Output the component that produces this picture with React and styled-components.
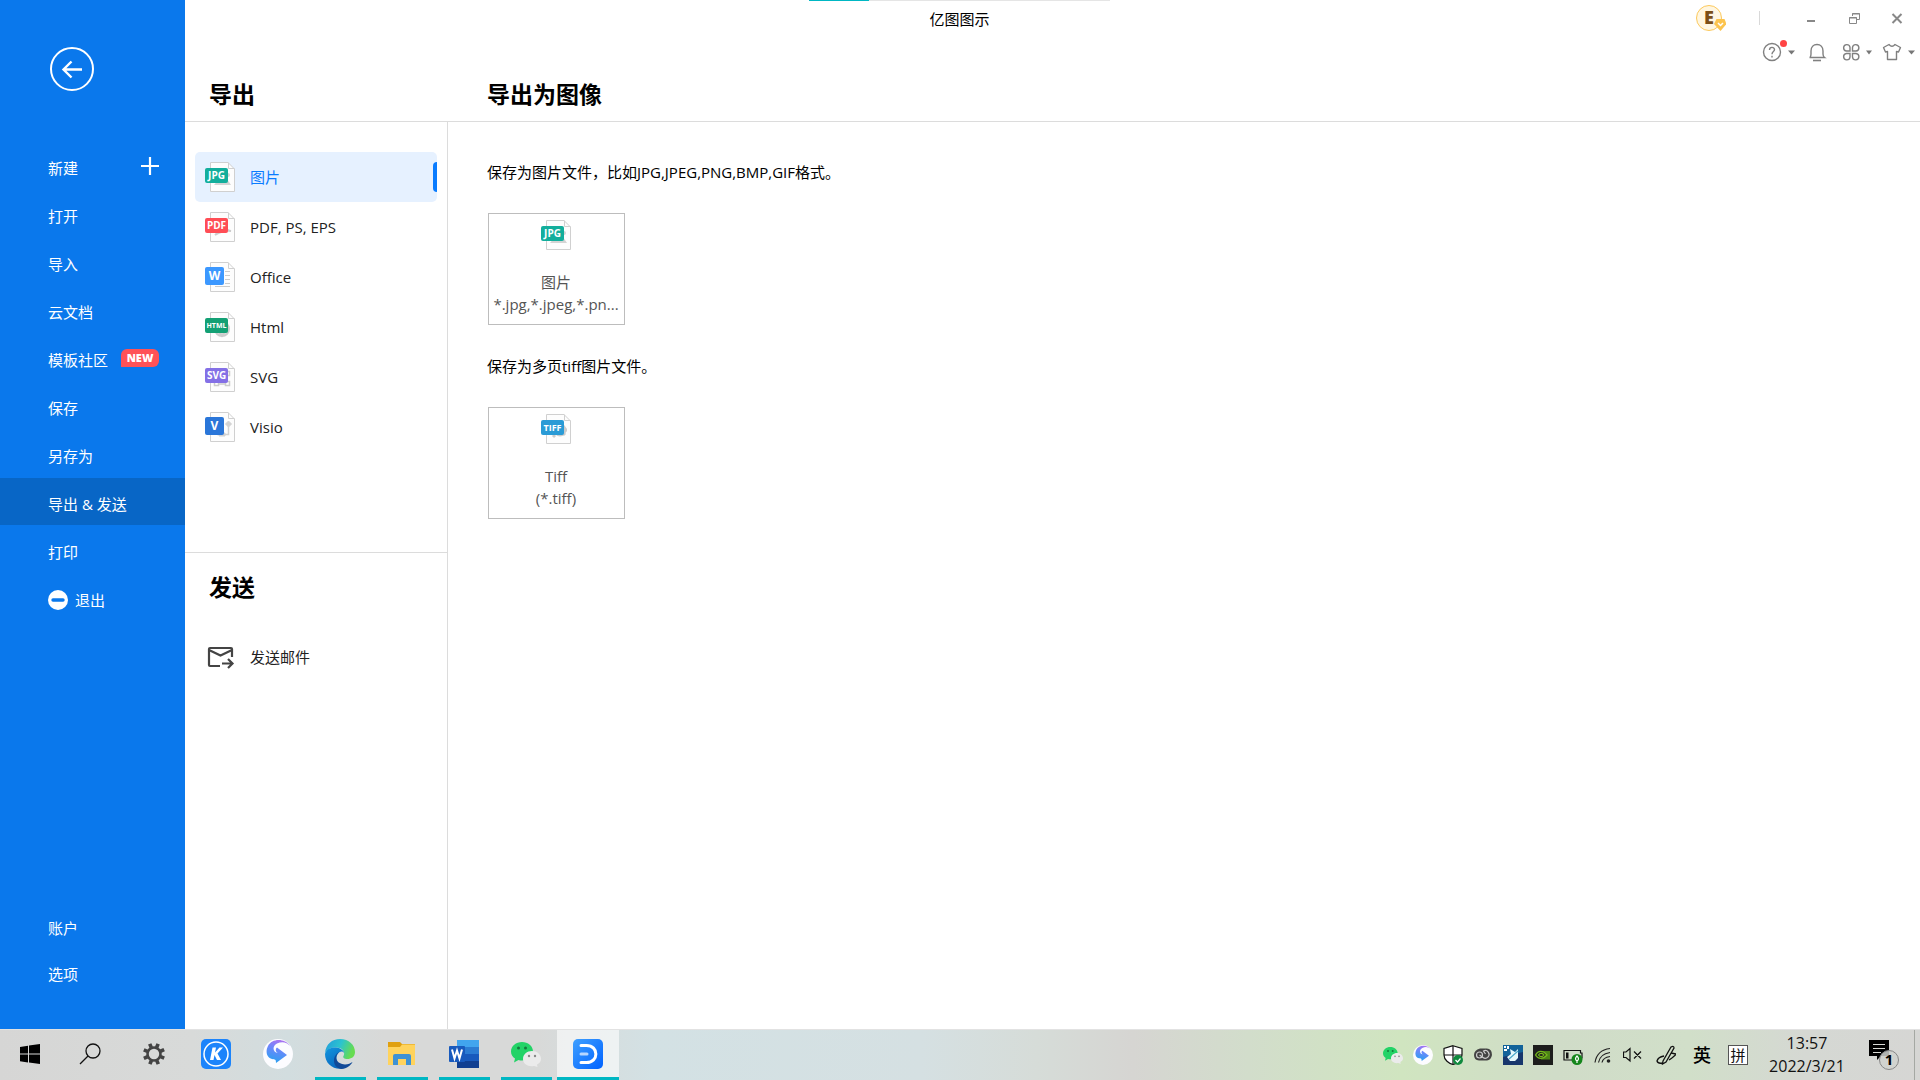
import React from 'react'
import styled, { createGlobalStyle } from 'styled-components'

const GlobalStyle = createGlobalStyle`
  * {
    box-sizing: border-box;
  }
  body {
    margin: 0;
    background: #fff;
    font-family: 'Open Sans', 'Noto Sans CJK SC', sans-serif;
    font-size: 15px;
    line-height: 22px;
    font-weight: 400;
    color: #222;
  }
  button {
    margin: 0;
    padding: 0;
    border: 0;
    background: none;
    font: inherit;
    color: inherit;
    text-align: left;
    cursor: pointer;
  }
  svg {
    display: block;
    flex: none;
  }
`

const Screen = styled.div`
  display: flex;
  flex-direction: column;
  min-height: 100vh;
`

const Window = styled.div`
  flex: 1;
  display: flex;
`

/* ---------- blue side bar ---------- */

const Sidebar = styled.aside`
  flex: none;
  width: 185px;
  display: flex;
  flex-direction: column;
  padding: 47px 0 32px;
  background: #0a78ec;
  color: #fff;
`

const BackButton = styled.button`
  width: 44px;
  height: 44px;
  margin: 0 0 51px 50px;
`

const Menu = styled.nav`
  display: flex;
  flex-direction: column;
`

const FootMenu = styled(Menu)`
  margin-top: auto;
`

const MenuItem = styled.button`
  display: flex;
  align-items: center;
  justify-content: space-between;
  height: ${(p) => (p.$foot ? 46 : 47)}px;
  margin-bottom: ${(p) => (p.$foot ? 0 : 1)}px;
  padding: 0 26px 0 48px;
  background: ${(p) => (p.$active ? '#0866c6' : 'none')};
`

const MenuLabel = styled.span`
  display: flex;
  align-items: center;
  gap: 7px;
  padding-top: ${(p) => (p.$foot ? 0 : 4)}px;
`

const NewBadge = styled.span`
  width: 38px;
  height: 18px;
  border-radius: 6px 6px 6px 0;
  background: #ff5257;
  font-size: 11px;
  font-weight: 800;
  line-height: 18px;
  text-align: center;
`

/* ---------- right pane ---------- */

const Pane = styled.div`
  flex: 1;
  min-width: 0;
  display: flex;
  flex-direction: column;
`

const WindowBar = styled.header`
  display: grid;
  grid-template-columns: calc(50vw - 336px) 301px 1fr;
  height: 36px;
`

const Caption = styled.div`
  grid-column: 2;
  display: flex;
  flex-direction: column;
  gap: 7px;
  color: #000;
  text-align: center;
`

const Progress = styled.div`
  height: 1px;
  background: linear-gradient(to right, #00b7c3 60px, #e5e5e5 60px);
`

const WindowControls = styled.div`
  display: flex;
  justify-content: flex-end;
  align-items: center;
  padding-right: 1px;
`

const AccountButton = styled.button`
  margin-right: 33px;
`

const Divider = styled.span`
  width: 1px;
  height: 14px;
  margin-right: 27px;
  background: #d9d9d9;
`

const ControlButton = styled.button`
  display: flex;
  justify-content: center;
  width: 44px;
`

const Toolbar = styled.div`
  display: flex;
  justify-content: flex-end;
  align-items: center;
  gap: 8px;
  height: 32px;
  padding-right: 2px;
`

const Titles = styled.div`
  display: flex;
  align-items: center;
  height: 54px;
  padding-bottom: 2px;
  border-bottom: 1px solid #dcdcdc;
`

const Title = styled.h2`
  width: ${(p) => (p.$wide ? 'auto' : '278px')};
  margin: 0;
  padding-left: 24px;
  color: #000;
  font-size: 23px;
  font-weight: 700;
  line-height: 34px;
`

const Columns = styled.div`
  flex: 1;
  display: flex;
`

const SideList = styled.div`
  flex: none;
  width: 263px;
  border-right: 1px solid #dcdcdc;
`

const ExportList = styled.nav`
  display: flex;
  flex-direction: column;
  height: 431px;
  padding: 30px 10px;
  border-bottom: 1px solid #dcdcdc;
`

const ExportItem = styled.button`
  display: flex;
  align-items: center;
  gap: 15px;
  height: 50px;
  padding-left: 10px;
  border-radius: 5px;
  background: ${(p) => (p.$active ? '#e6f1ff' : 'none')};
  color: ${(p) => (p.$active ? '#0a7cff' : '#222')};
`

const ActiveMark = styled.span`
  width: 4px;
  height: 30px;
  margin-left: auto;
  border-radius: 4px 0 0 4px;
  background: #0a7cff;
`

const SendSection = styled.section`
  padding-top: 17px;
`

const SendItem = styled.button`
  display: flex;
  align-items: center;
  gap: 15px;
  width: 100%;
  height: 50px;
  margin-top: 28px;
  padding-left: 20px;
`

const Content = styled.main`
  flex: 1;
  padding: 39px 40px 40px 39px;
`

const Hint = styled.p`
  margin: 0 0 30px;
  color: #000;
`

const FormatCard = styled.button`
  display: flex;
  flex-direction: column;
  align-items: center;
  width: 137px;
  height: 112px;
  margin: 0 0 30px 1px;
  padding: 6px 1px 0 0;
  border: 1px solid #bdbdbd;
  color: #555;
`

const CardName = styled.span`
  margin-top: 21px;
`

const CardMask = styled.span`
  white-space: nowrap;
`

/* ---------- task bar ---------- */

const TaskBar = styled.footer`
  display: flex;
  height: 51px;
  border-top: 1px solid #e2e2e2;
  background: linear-gradient(
    to right,
    #d6d6d5 0%,
    #d8dad9 10%,
    #d2dddf 15%,
    #d8d9d8 20%,
    #d8d9d8 28%,
    #d3e1e4 34%,
    #d5e0e2 48%,
    #d6dcd8 54%,
    #d6d5d2 59%,
    #d2ddcb 65%,
    #d0e5c0 73%,
    #d0dcc8 81%,
    #d1dfc9 88%,
    #d5d8d3 94%,
    #d6d6d4 100%
  );
  color: #111;
`

const TaskButton = styled.button`
  display: flex;
  flex-direction: column;
  align-items: center;
  justify-content: space-between;
  width: ${(p) => (p.$first ? 61 : 62)}px;
  padding-top: 9px;
  background: ${(p) => (p.$active ? 'rgba(255, 255, 255, 0.6)' : 'none')};
`

const RunningLine = styled.span`
  align-self: stretch;
  height: 3px;
  margin: 0 ${(p) => (p.$active ? 0 : 5)}px 0 ${(p) => (p.$active ? 0 : 6)}px;
  background: #00b7c3;
`

const Tray = styled.div`
  display: flex;
  align-items: center;
  margin-left: auto;
`

const TrayButton = styled.button`
  display: flex;
  justify-content: center;
  width: ${(p) => p.$width || 30}px;
`

const ImeMode = styled(TrayButton)`
  color: #000;
  font-size: 18px;
  font-weight: 500;
`

const ImeLayout = styled.span`
  width: 20px;
  height: 20px;
  border: 1px solid #555;
  background: #fff;
  font-size: 15px;
  line-height: 18px;
  text-align: center;
`

const Clock = styled.time`
  display: flex;
  flex-direction: column;
  width: 102px;
  font-size: 16px;
  line-height: 23px;
  text-align: center;
`

const ShowDesktop = styled.button`
  align-self: stretch;
  width: 6px;
  border-left: 1px solid #a5a8a3;
`

/* ---------- icons ---------- */

const BackIcon = () => (
  <svg width="44" height="44" viewBox="0 0 44 44" fill="none" stroke="#fff" strokeWidth="2">
    <circle cx="22" cy="22" r="21" />
    <path d="M32 22.500H14M21.500 14.500L13.500 22.500L21.500 30.500" strokeWidth="2.400" />
  </svg>
)

const PlusIcon = () => (
  <svg width="18" height="18" viewBox="0 0 18 18">
    <path d="M9 0V18M0 9H18" stroke="#fff" strokeWidth="2.200" />
  </svg>
)

const ExitIcon = () => (
  <svg width="20" height="20" viewBox="0 0 20 20">
    <circle cx="10" cy="10" r="10" fill="#fff" />
    <path d="M5 10H15" stroke="#0a78ec" strokeWidth="3.400" strokeLinecap="round" />
  </svg>
)

const pageMarks = {
  JPG: (
    <g fill="#d4d4d4">
      <circle cx="23" cy="13" r="2" />
      <path d="M9 23L15 16L19 19L22 17L26 23Z" />
    </g>
  ),
  PDF: (
    <path
      d="M10 23C14 20 17 17 19 10C20 17 23 19 26 19C20 18 15 20 10 23Z"
      fill="#ccc"
      stroke="#ccc"
      strokeWidth="2"
    />
  ),
  W: <path d="M20 9.500H25M20 13.500H25M20 17.500H25M20 21.500H25M10 24.500H25" stroke="#ccc" />,
  HTML: (
    <g fill="none" stroke="#ccc" strokeWidth="2">
      <circle cx="17" cy="17" r="7" fill="#e2e2e2" />
      <path d="M10 17H24M17 10C13 14 13 20 17 24C21 20 21 14 17 10" />
    </g>
  ),
  SVG: (
    <g fill="#fff" stroke="#ccc" strokeWidth="1.500">
      <path d="M12 11H22V22H12Z" />
      <path d="M9.500 19.500H13.500V23.500H9.500ZM20.500 19.500H24.500V23.500H20.500ZM20.500 9.500H24.500V13.500H20.500Z" />
    </g>
  ),
  V: (
    <g fill="#d2d2d2" stroke="#d2d2d2">
      <path d="M23.500 9L26.500 12L23.500 15L20.500 12Z" />
      <path d="M23.500 14V22.500H12" fill="none" strokeWidth="1.500" />
      <path d="M14 21H20V24H14Z" />
    </g>
  ),
  TIFF: (
    <g fill="none" stroke="#ccc" strokeWidth="3">
      <circle cx="19" cy="16" r="5" />
      <path d="M19 9V12M26 16H23M14 21L12 23M24 21L22 19" />
    </g>
  ),
}

const tagSizes = { W: 12, V: 12, HTML: 7, TIFF: 9 }

const FileIcon = ({ tag, color }) => {
  const square = tag.length === 1
  const width = square ? 19 : 23
  return (
    <svg width="30" height="30" viewBox="0 0 30 30">
      <path d="M5.500 0.500H23L29.500 7V29.500H5.500Z" fill="#fdfdfd" stroke="#d0d0d0" />
      <path d="M23.500 0.500V6.500H29.500" fill="none" stroke="#d0d0d0" />
      {pageMarks[tag]}
      <rect x="0" y={square ? 5 : 6} width={width} height={square ? 18 : 15} rx="2" fill={color} />
      <text
        x={width / 2}
        y={square ? 18 : tag === 'HTML' ? 16 : 17}
        fill="#fff"
        fontFamily="'Open Sans', sans-serif"
        fontSize={tagSizes[tag] || 10}
        fontWeight="700"
        textAnchor="middle"
      >
        {tag}
      </text>
    </svg>
  )
}

const MailIcon = () => (
  <svg width="30" height="24" viewBox="0 0 30 24" fill="none" stroke="#444" strokeWidth="2.200">
    <path d="M15 21H5Q4 21 4 20V4Q4 3 5 3H26Q27 3 27 4V12" />
    <path d="M4 5L15.500 10.500L27 5" />
    <path d="M17 18.500H27M23 14L27.500 18.500L23 23" />
  </svg>
)

const AccountIcon = () => (
  <svg width="32" height="28" viewBox="0 0 32 28">
    <circle cx="15" cy="14" r="12.500" fill="#fff6e0" stroke="#fcc95c" />
    <text
      x="15"
      y="20"
      fill="#7b4f16"
      fontFamily="'Open Sans', sans-serif"
      fontSize="18"
      fontWeight="800"
      textAnchor="middle"
    >
      E
    </text>
    <path d="M22.500 15H30.500L32.500 20L26.500 27L20 20Z" fill="#fcc44e" />
    <path d="M24 19L26.500 21.500L29 19" fill="none" stroke="#fff" strokeWidth="1.500" />
  </svg>
)

const MinimizeIcon = () => (
  <svg width="12" height="12" viewBox="0 0 12 12">
    <path d="M4 9H12" stroke="#888" strokeWidth="2" />
  </svg>
)

const RestoreIcon = () => (
  <svg width="14" height="12" viewBox="0 0 14 12" fill="none" stroke="#888">
    <path d="M6.500 4V1.500H13.500V7.500H11M6 2H14" />
    <path d="M3.500 5.500H10.500V11.500H3.500ZM3 6H11" />
  </svg>
)

const CloseIcon = () => (
  <svg width="12" height="12" viewBox="0 0 12 12">
    <path d="M1.500 2L10.500 11M10.500 2L1.500 11" stroke="#888" strokeWidth="2" />
  </svg>
)

const HelpIcon = () => (
  <svg width="38" height="24" viewBox="0 0 38 24" fill="none" stroke="#808080" strokeWidth="1.400">
    <circle cx="12" cy="12" r="8.500" />
    <path d="M9.500 10C9.500 6.500 14.500 6.500 14.500 9.800C14.500 11.500 12 11.800 12 14.200" />
    <path d="M12 15.800V17.400" />
    <circle cx="23.500" cy="3.500" r="3.500" fill="#ff4444" stroke="none" />
    <path d="M28 10.500H35L31.500 14.500Z" fill="#777" stroke="none" />
  </svg>
)

const BellIcon = () => (
  <svg width="22" height="24" viewBox="0 0 22 24" fill="none" stroke="#808080" strokeWidth="1.400">
    <path d="M4 17.500Q5 16.500 5 14V11C5 7 7.500 4.500 11 4.500S17 7 17 11V14Q17 16.500 18.500 17.500H3.500Z" />
    <path d="M7 20.500H15" strokeWidth="1.600" />
  </svg>
)

const CloverIcon = () => (
  <svg width="36" height="24" viewBox="0 0 36 24" fill="none" stroke="#808080" strokeWidth="1.400">
    <path d="M14 11H10.500A3.200 3.200 0 1 1 14 7.500Z" />
    <path d="M16.500 11H20A3.200 3.200 0 1 0 16.500 7.500Z" />
    <path d="M14 13.500H10.500A3.200 3.200 0 1 0 14 17Z" />
    <path d="M16.500 13.500H20A3.200 3.200 0 1 1 16.500 17Z" />
    <path d="M30 10.500H36L33 14.500Z" fill="#777" stroke="none" />
  </svg>
)

const ShirtIcon = () => (
  <svg width="38" height="24" viewBox="0 0 38 24" fill="none" stroke="#808080" strokeWidth="1.400">
    <path
      d="M9 4.500Q12 8 15 4.500L20.500 7.500L18.500 12L16.500 11.500V19.500H7.500V11.500L5.500 12L3.500 7.500Z"
      strokeLinejoin="round"
    />
    <path d="M28 10.500H35L31.500 14.500Z" fill="#777" stroke="none" />
  </svg>
)

const WindowsIcon = () => (
  <svg width="30" height="30" viewBox="0 0 30 30" fill="#000">
    <path d="M4 8L12 6.800V14.500H4ZM13 6.600L24 5V14.500H13ZM4 15.500H12V23.500L4 22.300ZM13 15.500H24V25L13 23.600Z" />
  </svg>
)

const SearchIcon = () => (
  <svg width="30" height="30" viewBox="0 0 30 30" fill="none" stroke="#111" strokeWidth="1.300">
    <circle cx="16" cy="12" r="7" />
    <path d="M11 17L3 25" />
  </svg>
)

const GearIcon = () => (
  <svg width="30" height="30" viewBox="0 0 30 30" fill="none" stroke="#444">
    <circle cx="15" cy="15" r="6.500" strokeWidth="2.600" />
    {[22, 67, 112, 157, 202, 247, 292, 337].map((a) => (
      <path key={a} d="M15 4V8" strokeWidth="3.600" transform={`rotate(${a} 15 15)`} />
    ))}
  </svg>
)

const KugouIcon = () => (
  <svg width="30" height="30" viewBox="0 0 30 30">
    <rect width="30" height="30" rx="5" fill="#1c84fb" />
    <circle cx="15" cy="15" r="12" fill="none" stroke="#fff" strokeWidth="1.500" />
    <path d="M11.500 8.500H15L14 13.500L18.500 8.500H22L16.500 14.500L20 21H16L13.500 16L12.500 21H9Z" fill="#fff" />
  </svg>
)

const BirdIcon = ({ size }) => (
  <svg width={size} height={size} viewBox="0 0 30 30">
    <defs>
      <linearGradient id={`bird${size}`} x1="0.700" y1="0" x2="0.400" y2="1">
        <stop offset="0" stopColor="#b070ee" />
        <stop offset="0.400" stopColor="#6f86fb" />
        <stop offset="1" stopColor="#2ba0f0" />
      </linearGradient>
    </defs>
    <circle cx="15" cy="15" r="15" fill="#fcfcff" />
    <path
      d="M27 7C22 -1 9 -1 5 7C2 13 4 19 9 20C12 20.500 13 20 13 24L24 16L14 8.500C12 10 12.500 13 15 14C9.500 13.500 9 7 14 4.500C19 2 24 3 27 7Z"
      fill={`url(#bird${size})`}
    />
  </svg>
)

const EdgeIcon = () => (
  <svg width="30" height="30" viewBox="0 0 30 30">
    <defs>
      <linearGradient id="edgeTop" x1="0" y1="0" x2="1" y2="0.300">
        <stop offset="0" stopColor="#229bdd" />
        <stop offset="0.550" stopColor="#2cc3cf" />
        <stop offset="1" stopColor="#66dc51" />
      </linearGradient>
      <linearGradient id="edgeLeft" x1="0" y1="0" x2="0.600" y2="1">
        <stop offset="0" stopColor="#1296df" />
        <stop offset="1" stopColor="#0a66bd" />
      </linearGradient>
    </defs>
    <path
      d="M0 14C1 5 7 0 15 0C24 0 30 6 30 13C30 18 26 20 22.500 20C19 20 17.500 18.500 18.500 17C20.500 14 18 9 12 8.500C7 8 2 10 0 14Z"
      fill="url(#edgeTop)"
    />
    <path
      d="M0 15C1 10 6 8 11 8.500C16 9 19 12 19 14C16 10 11 15 11.500 20C12 26 17 29.500 20 29.100C9 32 0 25 0 15Z"
      fill="url(#edgeLeft)"
    />
    <path
      d="M14.500 13C8 18 12 25 20 25.500C23 25.500 26 24 27.500 23C26 26 22 30 16 29.900C8 29 6 17 14.500 13Z"
      fill="#114a98"
    />
  </svg>
)

const FolderIcon = () => (
  <svg width="30" height="30" viewBox="0 0 30 30">
    <path d="M1 3H13L15 5H28V12H1Z" fill="#e0a010" />
    <path d="M1 8H13L15 5.500H28V26H1Z" fill="#ffd35c" />
    <path d="M6 26V17Q6 15 8 15H22Q24 15 24 17V26H19V20H11V26Z" fill="#3e92d4" />
  </svg>
)

const WordIcon = () => (
  <svg width="30" height="30" viewBox="0 0 30 30">
    <path d="M8 1H30V8H8Z" fill="#41a5ee" />
    <path d="M8 8H30V15H8Z" fill="#2b7cd3" />
    <path d="M8 15H30V22H8Z" fill="#185abd" />
    <path d="M8 22H30V29H8Z" fill="#103f91" />
    <rect x="0" y="7" width="16" height="16" rx="1" fill="#185abd" />
    <path d="M3 10.500L5.500 19.500L8 11.500L10.500 19.500L13 10.500" fill="none" stroke="#fff" strokeWidth="2" />
  </svg>
)

const WechatIcon = ({ size }) => (
  <svg width={size} height={size} viewBox="0 0 30 30">
    <path
      d="M11 3C5 3 0 7 0 12.500C0 15.500 1.500 18 4 19.500L3 23.500L7.500 21C14 23 22 19 22 12.500C22 7 17 3 11 3Z"
      fill="#23d367"
    />
    <path
      d="M21 12C16 12 12 15.500 12 20C12 25 17 28 23 27L26.500 28L26 25.500C28.500 24.500 30 22.500 30 20C30 15.500 26 12 21 12Z"
      fill="#ebebeb"
    />
    <g fill="#147a3e">
      <circle cx="7.500" cy="9" r="1.500" />
      <circle cx="14.500" cy="9" r="1.500" />
    </g>
    <g fill="#888">
      <circle cx="18" cy="17" r="1.200" />
      <circle cx="24" cy="17" r="1.200" />
    </g>
  </svg>
)

const EdrawIcon = () => (
  <svg width="30" height="30" viewBox="0 0 30 30" fill="none" strokeLinecap="round">
    <defs>
      <linearGradient id="edraw" x1="0" y1="0" x2="1" y2="1">
        <stop offset="0" stopColor="#3fa0ff" />
        <stop offset="1" stopColor="#0062ff" />
      </linearGradient>
    </defs>
    <rect width="30" height="30" rx="5" fill="url(#edraw)" />
    <path d="M8 6.500H13.500C26 6.500 26 23.500 13.500 23.500H8" stroke="#fff" strokeWidth="3" />
    <path d="M8 15H14" stroke="#b6d6ff" strokeWidth="3" />
  </svg>
)

const ShieldIcon = () => (
  <svg width="20" height="20" viewBox="0 0 20 20">
    <path
      d="M10 0.700L19 3.500V10C19 15 14 18.500 10 19.500C6 18.500 1 15 1 10V3.500Z"
      fill="#fff"
      stroke="#111"
      strokeWidth="1.200"
    />
    <path d="M10 1V19M1 10H19" stroke="#111" strokeWidth="1.200" />
    <circle cx="15" cy="15" r="5" fill="#108a3e" />
    <path d="M12.500 15L14.500 17L17.500 13.500" fill="none" stroke="#fff" strokeWidth="1.200" />
  </svg>
)

const CloudIcon = () => (
  <svg width="20" height="20" viewBox="0 0 20 20" fill="none">
    <path d="M7 3.500H13Q19 3 19 10Q18 15 14 15.500H6Q1 15 1 10Q1 5 7 3.500Z" fill="#444" />
    <circle cx="6.500" cy="10" r="3" stroke="#ccc" strokeWidth="1.200" />
    <path d="M6.500 10L10 12.500A3.800 3.800 0 1 0 10.500 6L12.500 9" stroke="#ccc" strokeWidth="1.200" />
  </svg>
)

const LeafTileIcon = () => (
  <svg width="20" height="20" viewBox="0 0 20 20">
    <rect width="20" height="20" fill="#17366c" />
    <path d="M0 0H20V7L0 12Z" fill="#12639a" />
    <path d="M7 4L12 7L15 4V13L12 16H7L4 12L8 9Z" fill="#e6f7fb" />
    <path d="M6 14L15 6" stroke="#4aa6c8" strokeWidth="1.200" />
    <path d="M1 1H3V3H1ZM4 1H6V4H4ZM1 4H4V6H1Z" fill="#fff" />
  </svg>
)

const NvidiaIcon = () => (
  <svg width="20" height="20" viewBox="0 0 20 20" fill="none" stroke="#74b71b">
    <rect width="20" height="20" fill="#1d1d1d" stroke="none" />
    <path d="M8 6H17V14.500H8Z" fill="#4c8416" stroke="none" />
    <path d="M2.500 10C5 5.500 10 5 14 10C10 14.500 5 14.500 2.500 10Z" fill="#1d1d1d" strokeWidth="1.300" />
    <path d="M5.500 10C7 7.500 10 8 11 10C9 12.500 7 12 5.500 10Z" strokeWidth="1.200" />
  </svg>
)

const BatteryIcon = () => (
  <svg width="20" height="20" viewBox="0 0 20 20">
    <path d="M1 5.500H17.500V8H19V13H17.500V15H1Z" fill="none" stroke="#111" strokeWidth="1.200" />
    <path d="M3 7.500H5.500V13.500H3Z" fill="#111" />
    <circle cx="14" cy="14.500" r="5.500" fill="#14861b" />
    <path d="M14 18V15M14 16Q11 14 14 11Q17 14 14 16Z" fill="none" stroke="#fff" strokeWidth="1.200" />
  </svg>
)

const WifiIcon = () => (
  <svg width="20" height="20" viewBox="0 0 20 20" fill="none" stroke="#222" strokeWidth="1.200">
    <path d="M2 17.500Q4 5 17 3.500M5.500 17.500Q7 9 17 7.500M9 17.500Q10 12.500 17 11.500" />
    <circle cx="15.500" cy="16" r="1.800" fill="#222" stroke="none" />
  </svg>
)

const MuteIcon = () => (
  <svg width="20" height="20" viewBox="0 0 20 20" fill="none" stroke="#111" strokeWidth="1.200">
    <path d="M0.500 7H3L7 3.500V16L3 12.500H0.500ZM11 6.500L18 13.500M18 6.500L11 13.500" />
  </svg>
)

const PenIcon = () => (
  <svg width="20" height="20" viewBox="0 0 20 20" fill="none" stroke="#111" strokeWidth="1.300">
    <path d="M7 16L15 2Q18 0.500 18 3L10 17L6.500 19Z" />
    <path d="M8 11Q2 12 1 16Q2 19 6.500 18M15 8L20 9Q19 11 13 15" />
  </svg>
)

const NoticeIcon = () => (
  <svg width="34" height="30" viewBox="0 0 34 30">
    <path d="M0 0H20V16H12L8 20V16H0Z" fill="#000" />
    <path d="M4 4.500H16M4 8.500H16M4 12.500H12" stroke="#d8dad5" />
    <circle cx="20" cy="20" r="9.500" fill="#d0d2ce" fillOpacity="0.850" stroke="#888" />
    <text
      x="20"
      y="25"
      fill="#000"
      fontFamily="'Open Sans', sans-serif"
      fontSize="15"
      fontWeight="700"
      textAnchor="middle"
    >
      1
    </text>
  </svg>
)

/* ---------- data ---------- */

const menu = [
  { label: '新建', extra: <PlusIcon /> },
  { label: '打开' },
  { label: '导入' },
  { label: '云文档' },
  { label: '模板社区', extra: <NewBadge>NEW</NewBadge> },
  { label: '保存' },
  { label: '另存为' },
  { label: '导出 & 发送', active: true },
  { label: '打印' },
  { label: '退出', icon: <ExitIcon /> },
]

const formats = [
  { label: '图片', tag: 'JPG', color: '#13ae9c', active: true },
  { label: 'PDF, PS, EPS', tag: 'PDF', color: '#ff4d55' },
  { label: 'Office', tag: 'W', color: '#3c98ff' },
  { label: 'Html', tag: 'HTML', color: '#13a074' },
  { label: 'SVG', tag: 'SVG', color: '#8470e6' },
  { label: 'Visio', tag: 'V', color: '#2a76d9' },
]

const cards = [
  {
    hint: '保存为图片文件，比如JPG,JPEG,PNG,BMP,GIF格式。',
    tag: 'JPG',
    color: '#13ae9c',
    name: '图片',
    mask: '*.jpg,*.jpeg,*.pn...',
  },
  {
    hint: '保存为多页tiff图片文件。',
    tag: 'TIFF',
    color: '#2a9bd6',
    name: 'Tiff',
    mask: '(*.tiff)',
  },
]

const tasks = [
  { name: 'Start', icon: <WindowsIcon />, first: true },
  { name: 'Search', icon: <SearchIcon /> },
  { name: 'Settings', icon: <GearIcon /> },
  { name: 'Kugou', icon: <KugouIcon /> },
  { name: 'Thunder', icon: <BirdIcon size={30} /> },
  { name: 'Edge', icon: <EdgeIcon />, running: true },
  { name: 'Explorer', icon: <FolderIcon />, running: true },
  { name: 'Word', icon: <WordIcon />, running: true },
  { name: 'WeChat', icon: <WechatIcon size={30} />, running: true },
  { name: 'Edraw', icon: <EdrawIcon />, running: true, active: true },
]

const tray = [
  { name: 'WeChat', icon: <WechatIcon size={20} /> },
  { name: 'Thunder', icon: <BirdIcon size={20} /> },
  { name: 'Security', icon: <ShieldIcon /> },
  { name: 'Creative Cloud', icon: <CloudIcon /> },
  { name: 'Assistant', icon: <LeafTileIcon /> },
  { name: 'Nvidia', icon: <NvidiaIcon /> },
  { name: 'Battery', icon: <BatteryIcon /> },
  { name: 'Wi-Fi', icon: <WifiIcon /> },
  { name: 'Volume', icon: <MuteIcon /> },
  { name: 'Ink', icon: <PenIcon />, width: 36 },
]

const App = () => {
  return (
    <Screen>
      <GlobalStyle />
      <Window>
        <Sidebar>
          <BackButton aria-label="Back">
            <BackIcon />
          </BackButton>
          <Menu>
            {menu.map((item) => (
              <MenuItem key={item.label} $active={item.active}>
                <MenuLabel>
                  {item.icon}
                  {item.label}
                </MenuLabel>
                {item.extra}
              </MenuItem>
            ))}
          </Menu>
          <FootMenu>
            <MenuItem $foot>
              <MenuLabel $foot>账户</MenuLabel>
            </MenuItem>
            <MenuItem $foot>
              <MenuLabel $foot>选项</MenuLabel>
            </MenuItem>
          </FootMenu>
        </Sidebar>
        <Pane>
          <WindowBar>
            <Caption>
              <Progress />
              亿图图示
            </Caption>
            <WindowControls>
              <AccountButton aria-label="Account">
                <AccountIcon />
              </AccountButton>
              <Divider />
              <ControlButton aria-label="Minimize">
                <MinimizeIcon />
              </ControlButton>
              <ControlButton aria-label="Restore">
                <RestoreIcon />
              </ControlButton>
              <ControlButton aria-label="Close">
                <CloseIcon />
              </ControlButton>
            </WindowControls>
          </WindowBar>
          <Toolbar>
            <button aria-label="Help">
              <HelpIcon />
            </button>
            <button aria-label="Notifications">
              <BellIcon />
            </button>
            <button aria-label="Apps">
              <CloverIcon />
            </button>
            <button aria-label="Theme">
              <ShirtIcon />
            </button>
          </Toolbar>
          <Titles>
            <Title>导出</Title>
            <Title as="h1" $wide>
              导出为图像
            </Title>
          </Titles>
          <Columns>
            <SideList>
              <ExportList>
                {formats.map((f) => (
                  <ExportItem key={f.label} $active={f.active}>
                    <FileIcon tag={f.tag} color={f.color} />
                    {f.label}
                    {f.active && <ActiveMark />}
                  </ExportItem>
                ))}
              </ExportList>
              <SendSection>
                <Title>发送</Title>
                <SendItem>
                  <MailIcon />
                  发送邮件
                </SendItem>
              </SendSection>
            </SideList>
            <Content>
              {cards.map((card) => (
                <section key={card.tag}>
                  <Hint>{card.hint}</Hint>
                  <FormatCard>
                    <FileIcon tag={card.tag} color={card.color} />
                    <CardName>{card.name}</CardName>
                    <CardMask>{card.mask}</CardMask>
                  </FormatCard>
                </section>
              ))}
            </Content>
          </Columns>
        </Pane>
      </Window>
      <TaskBar>
        {tasks.map((task) => (
          <TaskButton key={task.name} aria-label={task.name} $first={task.first} $active={task.active}>
            {task.icon}
            {task.running && <RunningLine $active={task.active} />}
          </TaskButton>
        ))}
        <Tray>
          {tray.map((item) => (
            <TrayButton key={item.name} aria-label={item.name} $width={item.width}>
              {item.icon}
            </TrayButton>
          ))}
          <ImeMode $width={36}>英</ImeMode>
          <TrayButton $width={36}>
            <ImeLayout>拼</ImeLayout>
          </TrayButton>
          <Clock dateTime="2022-03-21T13:57">
            <span>13:57</span>
            <span>2022/3/21</span>
          </Clock>
          <TrayButton aria-label="Action center" $width={56}>
            <NoticeIcon />
          </TrayButton>
          <ShowDesktop aria-label="Show desktop" />
        </Tray>
      </TaskBar>
    </Screen>
  )
}

export default App
